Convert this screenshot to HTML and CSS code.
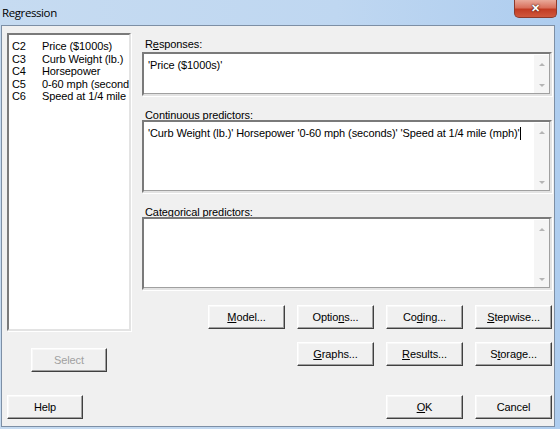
FILE: index.html
```html
<!DOCTYPE html>
<html lang="en">
<head>
    <meta charset="UTF-8">
    <title>Regression</title>
    <link rel="stylesheet" href="styles.css">
</head>
<body>
    <div class="window">
        <div class="titlebar">
            <span class="title">Regression</span>
            <button class="close" type="button">&#x2715;</button>
        </div>
        <div class="client">
            <div class="main">
                <div class="left-col">
                    <div class="listbox">
                        <div class="item"><span class="col">C2</span>Price ($1000s)</div>
                        <div class="item"><span class="col">C3</span>Curb Weight (lb.)</div>
                        <div class="item"><span class="col">C4</span>Horsepower</div>
                        <div class="item"><span class="col">C5</span>0-60 mph (seconds)</div>
                        <div class="item"><span class="col">C6</span>Speed at 1/4 mile (mph)</div>
                    </div>
                    <button class="btn disabled" type="button">Select</button>
                </div>
                <div class="right-col">
                    <label class="field-label first">R<u>e</u>sponses:</label>
                    <div class="textbox short">
                        <div class="text">'Price ($1000s)'</div>
                        <div class="scroll"><span class="up"></span><span class="down"></span></div>
                    </div>
                    <label class="field-label"><u>C</u>ontinuous predictors:</label>
                    <div class="textbox tall">
                        <div class="text">'Curb Weight (lb.)' Horsepower '0-60 mph (seconds)' 'Speed at 1/4 mile (mph)'<span class="caret"></span></div>
                        <div class="scroll"><span class="up"></span><span class="down"></span></div>
                    </div>
                    <label class="field-label">C<u>a</u>tegorical predictors:</label>
                    <div class="textbox tall">
                        <div class="text"></div>
                        <div class="scroll"><span class="up"></span><span class="down"></span></div>
                    </div>
                    <div class="btn-row">
                        <button class="btn" type="button"><u>M</u>odel...</button>
                        <button class="btn" type="button">Optio<u>n</u>s...</button>
                        <button class="btn" type="button">Co<u>d</u>ing...</button>
                        <button class="btn" type="button"><u>S</u>tepwise...</button>
                    </div>
                    <div class="btn-row second">
                        <button class="btn" type="button"><u>G</u>raphs...</button>
                        <button class="btn" type="button"><u>R</u>esults...</button>
                        <button class="btn" type="button">S<u>t</u>orage...</button>
                    </div>
                </div>
            </div>
            <div class="bottom-row">
                <button class="btn" type="button">Help</button>
                <div class="spacer"></div>
                <button class="btn" type="button"><u>O</u>K</button>
                <button class="btn" type="button">Cancel</button>
            </div>
        </div>
    </div>
</body>
</html>
```

FILE: styles.css
```css
body {
    margin: 0;
    background-color: #c0d7ef;
    font-family: "Liberation Sans", Arial, sans-serif;
    font-size: 11px;
    letter-spacing: -0.1px;
    color: #000000;
}
.window {
    width: 560px;
    height: 429px;
    display: flex;
    flex-direction: column;
    background: linear-gradient(to right, #c6dbf1 0%, #bfd7f1 60%, #aecdef 100%);
}
.titlebar {
    height: 25px;
    display: flex;
    justify-content: space-between;
    align-items: flex-start;
}
.title {
    font-family: "Open Sans", "Noto Sans", sans-serif;
    font-size: 11.5px;
    line-height: 25px;
    padding-left: 2px;
    letter-spacing: -0.4px;
}
.close {
    width: 43px;
    height: 18px;
    margin-right: 3px;
    padding: 0;
    border: 1px solid #8c3a2c;
    border-top: none;
    border-radius: 0 0 5px 5px;
    background: linear-gradient(to bottom, #e9a99a 0%, #d9705c 45%, #c23c24 55%, #d0583d 100%);
    color: #ffffff;
    font-size: 11px;
    font-weight: bold;
    line-height: 17px;
    text-shadow: 0 0 2px #4a1b12, 0 0 1px #4a1b12;
    cursor: pointer;
}
.client {
    flex: 1;
    margin: 0 5px 2px 1px;
    border: 1px solid #7d8fa5;
    background-color: #f0f0f0;
    padding: 7px 2px 0 5px;
    display: flex;
    flex-direction: column;
}
.main {
    display: flex;
}
.left-col {
    width: 124px;
    display: flex;
    flex-direction: column;
    align-items: center;
}
.listbox {
    box-sizing: border-box;
    width: 124px;
    height: 298px;
    background-color: #ffffff;
    border: 2px solid;
    border-color: #7a7a7a #e3e3e3 #e3e3e3 #7a7a7a;
    box-shadow: 1px 1px 0 #ffffff;
    padding: 5px 0 0 3px;
    overflow: hidden;
}
.item {
    white-space: nowrap;
    line-height: 12.5px;
}
.col {
    display: inline-block;
    width: 30px;
}
.left-col .btn {
    margin-top: 17px;
}
.right-col {
    margin-left: 11px;
    width: 410px;
    display: flex;
    flex-direction: column;
}
.field-label {
    display: block;
    line-height: 16px;
    height: 13px;
    margin-top: 11px;
    padding-left: 3px;
}
.field-label.first {
    line-height: 13px;
    margin-top: 5px;
    margin-bottom: 1px;
}
.textbox {
    box-sizing: border-box;
    display: flex;
    background-color: #ffffff;
    border: 2px solid;
    border-color: #7a7a7a #e3e3e3 #e3e3e3 #7a7a7a;
    box-shadow: 1px 1px 0 #ffffff, -1px -1px 0 #a0a0a0 inset;
}
.textbox.short {
    height: 44px;
}
.textbox.tall {
    height: 73px;
}
.text {
    flex: 1;
    padding: 5px 0 0 4px;
    line-height: 13px;
    white-space: nowrap;
}
.caret {
    display: inline-block;
    width: 1px;
    height: 13px;
    background-color: #000000;
    vertical-align: top;
}
.scroll {
    width: 15px;
    margin: 1px 1px 1px 0;
    background-color: #f5f5f5;
    display: flex;
    flex-direction: column;
    justify-content: space-between;
    align-items: center;
    padding: 8px 0 6px;
}
.up {
    width: 0;
    height: 0;
    border-left: 3px solid transparent;
    border-right: 3px solid transparent;
    border-bottom: 3px solid #b5b5b5;
}
.down {
    width: 0;
    height: 0;
    border-left: 3px solid transparent;
    border-right: 3px solid transparent;
    border-top: 3px solid #b5b5b5;
}
.btn-row {
    display: flex;
    justify-content: flex-end;
    gap: 12px;
    margin-top: 15px;
}
.btn-row.second {
    margin-top: 13px;
}
.btn {
    box-sizing: border-box;
    width: 77px;
    height: 24px;
    padding: 0;
    font-family: "Liberation Sans", Arial, sans-serif;
    font-size: 11px;
    letter-spacing: -0.1px;
    color: #000000;
    background-color: #f0f0f0;
    border: 1px solid;
    border-color: #ffffff #404040 #404040 #ffffff;
    box-shadow: inset -1px -1px 0 #a0a0a0, inset 1px 1px 0 #f8f8f8;
    cursor: pointer;
}
.btn.disabled {
    width: 76px;
    color: #a0a0a0;
}
.bottom-row {
    display: flex;
    gap: 12px;
    margin-top: 23px;
}
.bottom-row .btn:first-child {
    width: 76px;
}
.spacer {
    flex: 1;
}
```
